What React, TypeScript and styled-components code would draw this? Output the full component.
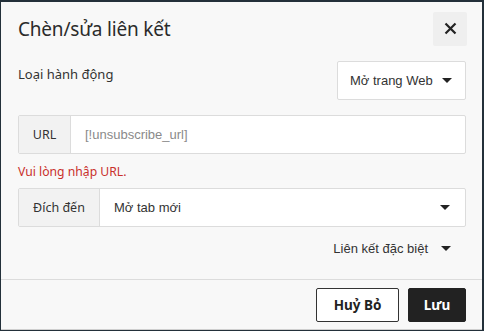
import React from "react";
import styled, { createGlobalStyle } from "styled-components";

const Global = createGlobalStyle`
  html, body { margin: 0; padding: 0; }
  body {
    background: #23303a;
    width: 484px;
    height: 331px;
    overflow: hidden;
    font-family: "Noto Sans", "Open Sans", sans-serif;
  }
`;

const Dialog = styled.div`
  margin: 2px 0 0 1px;
  width: 481px;
  height: 328px;
  background: #f8f8f8;
  border-bottom: 1px solid #cfcfcf;
  display: flex;
  flex-direction: column;
  box-sizing: border-box;
`;

const Header = styled.div`
  display: flex;
  align-items: center;
  justify-content: space-between;
  padding: 9px 15px 0 17px;
  height: 44px;
  box-sizing: border-box;
`;

const Title = styled.h1`
  margin: 0;
  font-family: "Noto Sans", sans-serif;
  font-size: 19px;
  font-weight: 400;
  color: #2b2b2b;
  letter-spacing: -0.2px;
`;

const CloseBtn = styled.button`
  width: 34px;
  height: 34px;
  border: none;
  border-radius: 2px;
  background: #efefef;
  display: flex;
  align-items: center;
  justify-content: center;
  padding: 0;
`;

const Body = styled.div`
  padding: 15px 16px 0 17px;
  display: flex;
  flex-direction: column;
  flex: 1;
`;

const ActionRow = styled.div`
  display: flex;
  justify-content: space-between;
  align-items: flex-start;
`;

const Label = styled.span`
  font-family: "Noto Sans", sans-serif;
  font-size: 13px;
  color: #333;
  margin-top: 4px;
`;

const SelectBox = styled.div`
  width: 129px;
  height: 39px;
  box-sizing: border-box;
  background: #fff;
  border: 1px solid #dcdcdc;
  border-radius: 2px;
  display: flex;
  align-items: center;
  justify-content: space-between;
  padding: 0 13px 0 12px;
  font-family: "Liberation Sans", Arial, sans-serif;
  font-size: 13px;
  color: #333;
`;

const Caret = styled.span`
  width: 0;
  height: 0;
  border-left: 5px solid transparent;
  border-right: 5px solid transparent;
  border-top: 5px solid #222;
`;

const Group = styled.div<{ $mt: number }>`
  margin-top: ${(p) => p.$mt}px;
  height: 39px;
  display: flex;
  border: 1px solid #dcdcdc;
  border-radius: 2px;
  box-sizing: border-box;
  background: #fff;
`;

const Addon = styled.div<{ $w: number }>`
  width: ${(p) => p.$w}px;
  flex: none;
  background: #f2f2f2;
  border-right: 1px solid #dcdcdc;
  display: flex;
  align-items: center;
  justify-content: center;
  font-family: "Noto Sans", sans-serif;
  font-size: 12.5px;
  color: #333;
  box-sizing: border-box;
`;

const Field = styled.div<{ $muted?: boolean }>`
  flex: 1;
  display: flex;
  align-items: center;
  justify-content: space-between;
  padding: 0 15px 0 14px;
  font-family: "Liberation Sans", Arial, sans-serif;
  font-size: 13px;
  color: ${(p) => (p.$muted ? "#8a8a8a" : "#333")};
`;

const ErrorText = styled.div`
  margin-top: 8px;
  font-family: "Noto Sans", sans-serif;
  font-size: 12.2px;
  color: #c9302c;
  line-height: 20px;
`;

const Special = styled.div`
  align-self: flex-end;
  margin: 14px 15px 0 0;
  display: flex;
  align-items: center;
  gap: 13px;
  font-family: "Liberation Sans", Arial, sans-serif;
  font-size: 13px;
  color: #333;
`;

const Footer = styled.div`
  border-top: 1px solid #dcdcdc;
  height: 50px;
  box-sizing: border-box;
  display: flex;
  justify-content: flex-end;
  align-items: flex-start;
  gap: 9px;
  padding: 8px 16px 0 0;
`;

const Button = styled.button<{ $primary?: boolean; $w: number }>`
  width: ${(p) => p.$w}px;
  height: 34px;
  box-sizing: border-box;
  padding: 0;
  border-radius: 2px;
  border: 1px solid ${(p) => (p.$primary ? "#222" : "#333")};
  background: ${(p) => (p.$primary ? "#222" : "#fff")};
  color: ${(p) => (p.$primary ? "#fff" : "#222")};
  font-family: "Noto Sans", sans-serif;
  font-weight: 700;
  font-size: 13.5px;
`;

export default function App() {
  return (
    <>
      <Global />
      <Dialog>
        <Header>
          <Title>Chèn/sửa liên kết</Title>
          <CloseBtn aria-label="Close">
            <svg width="13" height="13" viewBox="0 0 13 13">
              <path d="M1.5 1.5 L11.5 11.5 M11.5 1.5 L1.5 11.5" stroke="#222" strokeWidth="2.2" />
            </svg>
          </CloseBtn>
        </Header>
        <Body>
          <ActionRow>
            <Label>Loại hành động</Label>
            <SelectBox>
              <span>Mở trang Web</span>
              <Caret />
            </SelectBox>
          </ActionRow>
          <Group $mt={15}>
            <Addon $w={52}>URL</Addon>
            <Field $muted>[!unsubscribe_url]</Field>
          </Group>
          <ErrorText>Vui lòng nhập URL.</ErrorText>
          <Group $mt={6}>
            <Addon $w={81}>Đích đến</Addon>
            <Field>
              <span>Mở tab mới</span>
              <Caret />
            </Field>
          </Group>
          <Special>
            <span>Liên kết đặc biệt</span>
            <Caret />
          </Special>
        </Body>
        <Footer>
          <Button $w={83}>Huỷ Bỏ</Button>
          <Button $primary $w={58}>Lưu</Button>
        </Footer>
      </Dialog>
    </>
  );
}
